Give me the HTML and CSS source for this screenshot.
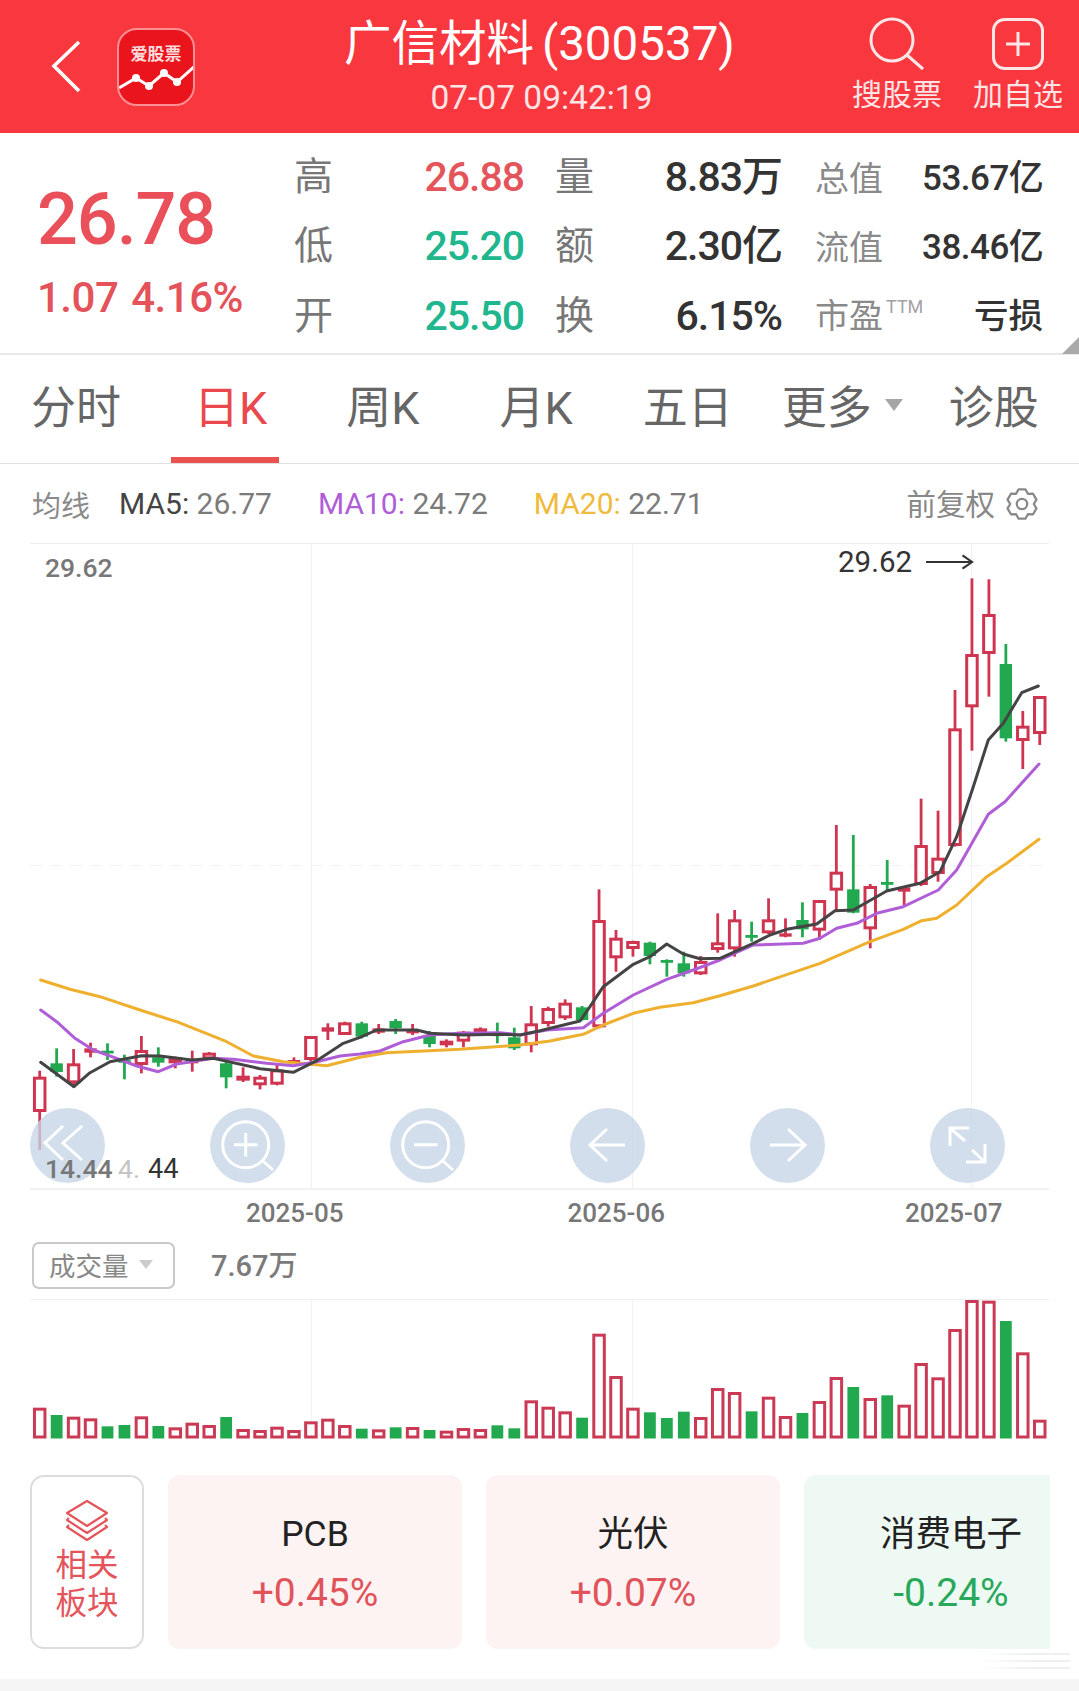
FILE: index.html
```html
<!DOCTYPE html>
<html lang="zh-CN">
<head>
<meta charset="utf-8">
<title>广信材料 (300537)</title>
<link rel="stylesheet" href="styles.css">
</head>
<body>
<div class="page">
  <header class="topbar">
    <div class="top-left">
      <svg class="back" viewBox="0 0 30 54" aria-hidden="true"><path d="M28 2 L3 26 L28 51"/></svg>
      <div class="logo">
        <span class="logo-text">爱股票</span>
        <svg class="logo-chart" viewBox="0 0 78 36" aria-hidden="true">
          <path d="M0 27 L17 17 L30 25 L45 12 L58 21 L76 5"/>
          <circle cx="17" cy="17" r="4"/><circle cx="30" cy="25" r="4"/><circle cx="45" cy="12" r="4"/><circle cx="58" cy="21" r="4"/>
        </svg>
      </div>
    </div>
    <div class="top-mid">
      <div class="stock-name">广信材料 (300537)</div>
      <div class="stock-time">07-07 09:42:19</div>
    </div>
    <div class="top-right">
      <div class="action">
        <svg viewBox="0 0 60 56" aria-hidden="true"><circle cx="25" cy="24" r="21"/><path d="M40.5 39.5 L56 53"/></svg>
        <span>搜股票</span>
      </div>
      <div class="action">
        <svg viewBox="0 0 60 56" aria-hidden="true"><rect x="5.5" y="3.5" width="49" height="49" rx="11"/><path d="M30 16 V40 M18 28 H42"/></svg>
        <span>加自选</span>
      </div>
    </div>
  </header>

  <section class="quote">
    <div class="price-box">
      <div class="price">26.78</div>
      <div class="change">1.07 4.16%</div>
    </div>
    <div class="stats">
      <span class="s-label">高</span><span class="s-val up">26.88</span>
      <span class="s-label s-label2">量</span><span class="s-val">8.83万</span>
      <span class="s-small">总值</span><span class="s-val2">53.67亿</span>

      <span class="s-label">低</span><span class="s-val down">25.20</span>
      <span class="s-label s-label2">额</span><span class="s-val">2.30亿</span>
      <span class="s-small">流值</span><span class="s-val2">38.46亿</span>

      <span class="s-label">开</span><span class="s-val down">25.50</span>
      <span class="s-label s-label2">换</span><span class="s-val">6.15%</span>
      <span class="s-small s-last">市盈<sup class="ttm">TTM</sup></span><span class="s-val2 s-last s-cn">亏损</span>
    </div>
    <i class="corner"></i>
  </section>

  <nav class="tabs">
    <span class="tab t1">分时</span>
    <span class="tab t2 active">日K</span>
    <span class="tab t3">周K</span>
    <span class="tab t4">月K</span>
    <span class="tab t5">五日</span>
    <span class="tab t6">更多<i class="caret"></i></span>
    <span class="tab t7">诊股</span>
  </nav>

  <div class="ma-row">
    <span class="ma-title">均线</span>
    <span class="ma m5"><b>MA5:</b> 26.77</span>
    <span class="ma m10"><b>MA10:</b> 24.72</span>
    <span class="ma m20"><b>MA20:</b> 22.71</span>
    <span class="adjust"><span class="adjust-text">前复权</span>
      <svg class="gear" viewBox="-18 -18 36 36" aria-hidden="true">
        <polygon points="-3.6,-15.6 3.6,-15.6 6.25,-10.8 11.7,-10.9 15.3,-4.7 12.5,0 15.3,4.7 11.7,10.9 6.25,10.8 3.6,15.6 -3.6,15.6 -6.25,10.8 -11.7,10.9 -15.3,4.7 -12.5,0 -15.3,-4.7 -11.7,-10.9 -6.25,-10.8"/>
        <circle r="5.5"/>
      </svg>
    </span>
  </div>

  <div class="kline">
    <svg id="kchart" class="chart-svg" viewBox="0 543 1079 647" aria-hidden="true"></svg>
    <span class="lbl lbl-top">29.62</span>
    <span class="lbl-high">29.62<svg viewBox="0 0 50 18" aria-hidden="true"><path d="M0 9 H48 M38 2 L48 9 L38 16"/></svg></span>
    <div class="kbtns">
      <div class="kbtn"><svg viewBox="0 0 75 75" aria-hidden="true"><path d="M33 18 L15 35 L33 52 M52 18 L33 35 L52 52"/></svg></div>
      <div class="kbtn"><svg viewBox="0 0 75 75" aria-hidden="true"><circle cx="35.7" cy="36.7" r="23"/><path d="M53 53 L63 62 M35.7 25 V48.5 M24 36.7 H47.5"/></svg></div>
      <div class="kbtn"><svg viewBox="0 0 75 75" aria-hidden="true"><circle cx="35.7" cy="36.7" r="23"/><path d="M53 53 L63 62 M24 36.7 H47.5"/></svg></div>
      <div class="kbtn"><svg viewBox="0 0 75 75" aria-hidden="true"><path d="M55 37 H20 M37 21 L20 37 L37 53"/></svg></div>
      <div class="kbtn"><svg viewBox="0 0 75 75" aria-hidden="true"><path d="M20 37 H55 M38 21 L55 37 L38 53"/></svg></div>
      <div class="kbtn"><svg viewBox="0 0 75 75" aria-hidden="true"><path d="M20 38 V20 H39 M20 20 L35 33 M55 36 V54 H36 M55 54 L42 42"/></svg></div>
    </div>
    <span class="lbl lbl-low">14.44</span>
    <span class="lbl-ghost">4.</span>
    <span class="lbl-dark">44</span>
  </div>

  <div class="dates">
    <span class="d1">2025-05</span>
    <span class="d2">2025-06</span>
    <span class="d3">2025-07</span>
  </div>

  <div class="vol-head">
    <div class="vol-select">成交量<i class="caret caret-sm"></i></div>
    <span class="vol-val">7.67万</span>
  </div>

  <svg id="vchart" class="vol-svg" viewBox="0 1299 1079 140" aria-hidden="true"></svg>

  <div class="cards">
    <div class="card-head">
      <svg viewBox="0 0 46 44" aria-hidden="true">
        <path d="M23 2 L43 14 L23 27 L3 14 Z"/>
        <path d="M5 19 L3 21 L23 34 L43 21 L41 19"/>
        <path d="M5 26 L3 28 L23 41 L43 28 L41 26"/>
      </svg>
      <span>相关<br>板块</span>
    </div>
    <div class="card card-up"><div class="c-name">PCB</div><div class="c-val">+0.45%</div></div>
    <div class="card card-up"><div class="c-name">光伏</div><div class="c-val">+0.07%</div></div>
    <div class="card card-down"><div class="c-name">消费电子</div><div class="c-val">-0.24%</div></div>
  </div>

  <div class="footer-space"></div>
  <div class="footer-strip"></div>
  <i class="smudge"></i>
</div>
<script src="chart.js"></script>
</body>
</html>
```
FILE: styles.css
```css
* { box-sizing: border-box; }
html, body { margin: 0; padding: 0; background: #fff; }
body { font-family: Roboto, "Noto Sans CJK SC", sans-serif; color: #333; }
i { display: block; }

.page { position: relative; width: 1079px; height: 1691px; overflow: hidden; display: flex; flex-direction: column; }

/* top bar */
.topbar { flex: none; height: 133px; background: #f9373f; color: #fff; display: grid; grid-template-columns: 1fr auto 1fr; }
.top-left { display: flex; align-items: center; padding-left: 51px; }
.back { width: 30px; height: 54px; fill: none; stroke: #fff; stroke-width: 3.6; }
.logo { position: relative; width: 78px; height: 78px; margin-left: 36px; border-radius: 20px; border: 2.5px solid #fb8f93; background: #e9141c; overflow: hidden; }
.logo-text { display: block; margin-top: 14px; text-align: center; font-size: 17px; line-height: 20px; font-weight: 700; color: #fbdcdc; }
.logo-chart { position: absolute; left: 0; bottom: 7px; width: 78px; height: 36px; fill: #fff; }
.logo-chart path { fill: none; stroke: #fff; stroke-width: 3; }
.top-mid { padding-top: 14px; text-align: center; }
.stock-name { font-size: 47.5px; line-height: 60px; word-spacing: -4px; white-space: nowrap; }
.stock-time { padding-left: 4px; font-size: 33.5px; line-height: 40px; margin-top: 4px; color: #fde4e5; }
.top-right { display: flex; justify-content: flex-end; gap: 31px; padding: 16px 16px 0 0; }
.action { width: 90px; display: flex; flex-direction: column; align-items: center; }
.action svg { width: 60px; height: 56px; fill: none; stroke: #fde6e7; stroke-width: 3; }
.action span { font-size: 30px; line-height: 36px; margin-top: 5px; white-space: nowrap; color: #fde4e5; }

/* quote */
.quote { position: relative; flex: none; height: 222px; border-bottom: 2px solid #e8e8e8; display: flex; }
.price-box { width: 294px; padding: 48px 0 0 37px; }
.price { font-size: 72px; line-height: 78px; font-weight: 500; color: #e9505a; letter-spacing: -1.1px; }
.change { font-size: 42px; line-height: 50px; margin-top: 14px; font-weight: 500; color: #e4525a; letter-spacing: -.5px; word-spacing: 3px; white-space: nowrap; }
.stats { padding-top: 9px; display: grid; grid-template-columns: 39px 191px 69px 189px 140px 121px; grid-auto-rows: 69.5px; align-items: center; }
.s-label { font-size: 39px; line-height: 50px; color: #777; }
.s-label2 { padding-left: 31px; white-space: nowrap; }
.s-val { text-align: right; font-size: 41px; line-height: 50px; font-weight: 500; color: #333; letter-spacing: -1px; white-space: nowrap; }
.up { color: #e4555b; }
.down { color: #20b68e; }
.s-small { padding-left: 33px; margin-top: 4px; font-size: 34px; line-height: 44px; color: #8a8a8a; white-space: nowrap; }
.s-val2 { text-align: right; margin-top: 4px; font-size: 35px; line-height: 44px; font-weight: 500; color: #333; letter-spacing: -.5px; white-space: nowrap; }
.s-last { margin-top: 0; }
.s-cn { font-size: 34.5px; letter-spacing: 0; }
.ttm { font-size: 18px; line-height: 0; color: #a2a2a2; vertical-align: 15px; margin-left: 3px; }
.corner { position: absolute; right: 0; bottom: -1px; width: 0; height: 0; border-style: solid; border-width: 0 0 17px 17px; border-color: transparent transparent #aaa transparent; }

/* tabs */
.tabs { flex: none; height: 109px; padding-left: 31px; border-bottom: 1px solid #e0e0e0; display: flex; align-items: stretch; font-size: 45px; color: #666; white-space: nowrap; }
.tab { position: relative; display: flex; align-items: center; padding-bottom: 9px; }
.t2 { margin-left: 73px; }
.t3 { margin-left: 79px; }
.t4 { margin-left: 80px; }
.t5 { margin-left: 70px; }
.t6 { margin-left: 49px; }
.t7 { margin-left: 46px; }
.active { color: #e9484c; }
.active::after { content: ""; position: absolute; left: -23px; bottom: 0; width: 108px; height: 6px; background: #e9524f; }
.caret { width: 0; height: 0; margin-left: 13px; border-style: solid; border-width: 12px 9px 0; border-color: #a6a6a6 transparent transparent; }

/* moving averages */
.ma-row { flex: none; height: 79px; padding: 0 40px 0 32px; display: flex; align-items: center; font-size: 30px; color: #7b7b7b; white-space: nowrap; }
.ma-title { font-size: 29px; color: #8a8a8a; }
.ma b { font-weight: 400; }
.m5 { margin-left: 29px; }
.m5 b { color: #444; }
.m10 { margin-left: 46px; }
.m10 b { color: #b05ed8; }
.m20 { margin-left: 46px; }
.m20 b { color: #f0bb3c; }
.adjust { margin-left: auto; display: flex; align-items: center; gap: 10px; color: #888; }
.adjust-text { font-size: 29.5px; margin-bottom: 4px; }
.gear { width: 34px; height: 34px; fill: none; stroke: #888; stroke-width: 2.4; stroke-linejoin: round; }

/* k line */
.kline { position: relative; flex: none; height: 647px; }
.chart-svg { display: block; width: 1079px; height: 647px; }
.lbl { position: absolute; font-size: 26.5px; line-height: 32px; font-weight: 500; color: #777; }
.lbl-top { left: 45px; top: 9px; }
.lbl-high { position: absolute; left: 838px; top: 2px; display: flex; align-items: center; gap: 14px; font-size: 29.5px; line-height: 34px; color: #333; }
.lbl-high svg { width: 48px; height: 18px; fill: none; stroke: #333; stroke-width: 2.2; }
.lbl-low { left: 45px; top: 610px; }
.lbl-ghost { position: absolute; left: 118px; top: 610px; font-size: 26.5px; line-height: 32px; color: #c4c4c4; }
.lbl-dark { position: absolute; left: 148px; top: 610px; font-size: 27px; line-height: 32px; color: #333; }
.kbtns { position: absolute; left: 30px; top: 565px; display: flex; gap: 105px; }
.kbtn { width: 75px; height: 75px; border-radius: 50%; background: rgba(197, 213, 229, .78); }
.kbtn svg { display: block; width: 75px; height: 75px; fill: none; stroke: #fff; stroke-width: 3; }

/* dates */
.dates { flex: none; height: 45px; padding-left: 246px; display: flex; align-items: center; font-size: 26px; font-weight: 500; color: #777; }
.d2 { margin-left: 224px; }
.d3 { margin-left: 240px; }

/* volume */
.vol-head { flex: none; height: 47px; margin-top: 7px; display: flex; align-items: center; padding-left: 32px; }
.vol-select { width: 143px; height: 47px; padding: 0 0 2px 15px; border: 2px solid #c8c8c8; border-radius: 7px; display: flex; align-items: center; font-size: 26.5px; color: #888; }
.caret-sm { margin-left: 10px; border-width: 9px 7px 0; border-color: #ccc transparent transparent; }
.vol-val { margin: 0 0 5px 36px; font-size: 29px; font-weight: 500; color: #7b7b7b; }
.vol-svg { flex: none; display: block; margin-top: 10px; width: 1079px; height: 140px; }

/* cards */
.cards { flex: none; width: 1050px; height: 174px; margin-top: 36px; padding-left: 30px; display: flex; gap: 24px; overflow: hidden; }
.card-head { flex: none; width: 114px; height: 174px; border: 2px solid #ddd; border-radius: 14px; display: flex; flex-direction: column; align-items: center; padding-top: 22px; }
.card-head svg { width: 46px; height: 44px; fill: none; stroke: #e4555b; stroke-width: 2.2; stroke-linejoin: round; }
.card-head span { margin-top: 4px; font-size: 31.5px; line-height: 38px; text-align: center; color: #e4555b; }
.card { flex: none; width: 294px; height: 174px; border-radius: 12px; text-align: center; padding-top: 29px; }
.card-up { background: #fef3f3; }
.card-down { background: #eef9f4; }
.c-name { font-size: 35.5px; line-height: 60px; color: #222; }
.c-val { margin-top: 4px; font-size: 39px; line-height: 50px; }
.card-up .c-val { color: #e0535b; }
.card-down .c-val { color: #27a85a; }

.footer-space { flex: 1; }
.footer-strip { flex: none; height: 12px; background: #f5f5f5; }
.smudge { position: absolute; right: 9px; bottom: 18px; width: 90px; height: 20px; background: linear-gradient(90deg, #fff, transparent 60%), repeating-linear-gradient(180deg, #efefef 0 2px, #fff 2px 7px); }
```
FILE: chart.js
```js
(function () {
  var RED = '#cf3550', GREEN = '#22a950';
  var cx = function (i) { return 39.7 + 16.95 * i; };

  // Candles: [type, bodyTop, bodyBottom, wickTop, wickBottom] in crop units
  var groups = [
    { base: 980, rows: [
      ['r',290,396,272,510],['g',250,276,205,290],['r',250,310,207,322],['r',205,218,188,232],['g',212,218,190,240],
      ['g',240,244,224,298],['r',210,255,168,280],['g',232,248,202,260],['r',232,250,230,265],['r',240,250,212,275],
      ['r',218,238,216,240],['g',250,292,245,325],['r',287,302,262,306],['r',290,316,285,328],['r',268,314,255,316],
      ['r',240,246,232,248],['r',168,240,168,245],['r',142,155,130,180],['r',127,165,125,165]
    ]},
    { base: 850, rows: [
      ['g',520,560,515,565],['r',535,548,522,552],['g',513,535,507,552],['r',538,550,522,555],['g',555,582,543,592],
      ['r',572,586,568,592],['r',545,575,543,592],['r',535,552,532,555],['g',550,553,518,580],['g',562,595,533,600],
      ['r',520,586,468,607],['r',474,522,470,530],['r',458,505,448,510],['g',472,510,468,512],['r',210,532,118,535],
      ['r',263,325,240,365],['r',273,297,272,320],['g',278,318,275,343],['g',330,334,328,380],['g',340,370,305,380],
      ['r',333,373,318,375],['r',277,300,190,308]
    ]},
    { base: 560, rows: [
      ['r',1078,1168,1050,1190],['g',1125,1130,1085,1145],['r',1078,1120,1015,1122],['r',1120,1130,1075,1132],['g',1080,1108,1027,1132],
      ['r',1020,1112,1020,1140],['r',935,992,795,1055],['g',988,1058,825,1060],['r',978,1108,972,1165],['g',966,972,900,990],
      ['r',982,995,978,1035],['r',855,975,716,978],['r',893,942,752,965],['r',505,858,390,860],['r',282,442,55,572],
      ['r',162,282,58,410],['g',312,535,252,545],['r',497,543,453,627],['r',408,522,408,555]
    ]}
  ];

  var lines = {
    ma20: { color: '#eeb02e', segs: [
      [980, 0, [[122,0],[210,28],[300,50],[420,90],[530,125],[680,185],[760,228],[850,245],[980,257],[1080,232]]],
      [850, 360, [[80,608],[300,598],[480,585],[570,573],[670,553],[730,525],[820,490],[900,472],[1000,458],[1080,437]]],
      [960, 720, [[100,78],[300,10]]],
      [560, 720, [[450,1145],[550,1108],[605,1082],[650,1075],[710,1035],[800,950],[860,910],[957,838]]]
    ]},
    ma10: { color: '#b05ed8', segs: [
      [980, 0, [[122,90],[170,125],[225,175],[280,210],[350,235],[410,258],[475,275],[530,252],[640,235],[700,238],[800,250],[880,257],[950,245],[1020,228],[1080,222]]],
      [850, 360, [[60,603],[130,575],[210,555],[300,550],[420,548],[480,555],[560,540],[670,533],[730,490],[820,435],[920,388],[1000,360],[1080,330]]],
      [560, 720, [[100,1155],[250,1150],[300,1135],[350,1105],[410,1090],[470,1060],[550,1040],[655,990],[710,930],[805,763],[855,725],[957,612]]]
    ]},
    ma5: { color: '#444444', segs: [
      [980, 0, [[122,247],[222,320],[270,278],[330,245],[425,227],[480,228],[575,240],[640,235],[780,266],[880,277],[950,242],[1030,190],[1080,172]]],
      [850, 360, [[50,540],[170,540],[210,550],[310,555],[420,553],[480,555],[540,542],[660,513],[690,470],[730,410],[820,343],[870,320],[920,282],[970,312],[1020,326],[1080,325]]],
      [560, 720, [[100,1150],[150,1125],[200,1108],[290,1092],[345,1052],[400,1050],[500,993],[600,970],[660,935],[710,830],[760,680],[805,540],[850,490],[905,398],[955,378]]]
    ]}
  };

  // Volume bar tops, in crop units (y = 1220 + v / 3)
  var vol = [
    ['r',563],['g',585],['r',590],['r',595],['g',619],['g',615],['r',589],['g',618],['r',622],['r',608],
    ['r',615],['g',591],['r',627],['r',630],['r',620],['r',630],['r',604],['r',596],['r',615],['g',626],
    ['r',628],['g',622],['r',621],['g',630],['r',632],['r',624],['r',627],['g',616],['g',625],['r',541],
    ['r',560],['r',574],['g',593],['r',341],['r',468],['r',563],['g',577],['g',594],['g',575],['r',591],
    ['r',504],['r',516],['g',574],['r',530],['r',588],['g',579],['r',543],['r',471],['g',501],['r',534],
    ['g',526],['r',554],['r',429],['r',472],['r',327],['r',240],['r',242],['g',303],['r',397],['r',599]
  ];

  function grid(x, y1, y2) {
    return '<line x1="' + x + '" x2="' + x + '" y1="' + y1 + '" y2="' + y2 + '" stroke="#f2f2f2" stroke-width="1"/>';
  }
  function hline(y, dash) {
    return '<line x1="30" x2="1049" y1="' + y + '" y2="' + y + '" stroke="' + (dash ? '#f2f2f2' : '#eeeeee') + '" stroke-width="1"' + (dash ? ' stroke-dasharray="12 8"' : '') + '/>';
  }

  var k = hline(543.5) + hline(865.5, true) + '<line x1="30" x2="1049" y1="1189" y2="1189" stroke="#e2e2e2" stroke-width="1"/>';
  [311.5, 632.5, 971.5].forEach(function (x) { k += grid(x, 544, 1189); });

  var i = 0;
  groups.forEach(function (g) {
    g.rows.forEach(function (r) {
      var x = cx(i++), col = r[0] === 'r' ? RED : GREEN;
      var t = g.base + r[1] / 3, b = g.base + r[2] / 3, wt = g.base + r[3] / 3, wb = g.base + r[4] / 3;
      k += '<line x1="' + x + '" x2="' + x + '" y1="' + wt + '" y2="' + wb + '" stroke="' + col + '" stroke-width="2.8"/>';
      if (r[0] === 'g' || b - t < 4.5) {
        k += '<rect x="' + (x - 6.2) + '" y="' + t + '" width="12.4" height="' + Math.max(b - t, 2.8) + '" fill="' + col + '"/>';
      } else {
        k += '<rect x="' + (x - 5.25) + '" y="' + (t + 1.5) + '" width="10.5" height="' + (b - t - 3) + '" fill="#fff" stroke="' + col + '" stroke-width="3"/>';
      }
    });
  });

  ['ma20', 'ma10', 'ma5'].forEach(function (name) {
    var pts = [];
    lines[name].segs.forEach(function (s) {
      s[2].forEach(function (p) { pts.push((s[1] + p[0] / 3).toFixed(1) + ',' + (s[0] + p[1] / 3).toFixed(1)); });
    });
    k += '<polyline points="' + pts.join(' ') + '" fill="none" stroke="' + lines[name].color + '" stroke-width="3" stroke-linejoin="round" stroke-linecap="round"/>';
  });
  document.getElementById('kchart').innerHTML = k;

  var v = hline(1299.5) + grid(311.5, 1300, 1438) + grid(632.5, 1300, 1438) + grid(971.5, 1300, 1438);
  vol.forEach(function (b, n) {
    var x = cx(n), top = 1220 + b[1] / 3, base = 1438.5;
    if (b[0] === 'g') {
      v += '<rect x="' + (x - 5.9) + '" y="' + top + '" width="11.8" height="' + (base - top) + '" fill="' + GREEN + '"/>';
    } else {
      v += '<rect x="' + (x - 5.25) + '" y="' + (top + 1.5) + '" width="10.5" height="' + (base - top - 3) + '" fill="#fff" stroke="#cb3a55" stroke-width="3"/>';
    }
  });
  document.getElementById('vchart').innerHTML = v;
})();
```
